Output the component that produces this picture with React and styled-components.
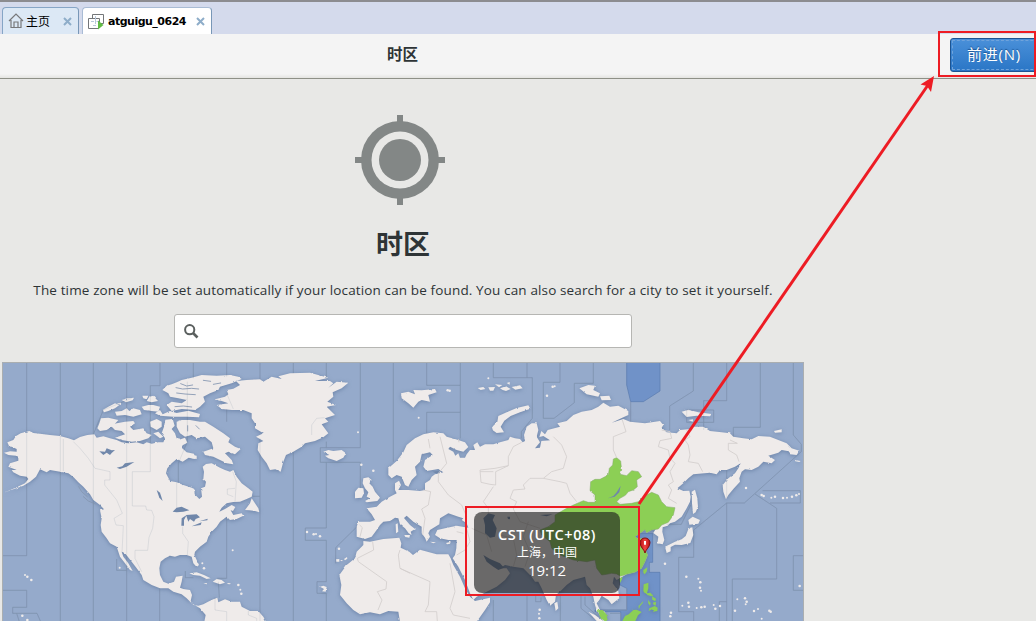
import React from 'react';
import styled, { createGlobalStyle } from 'styled-components';

const GlobalStyle = createGlobalStyle`
  * { box-sizing: border-box; }
  body { margin: 0; overflow: hidden; background: #e8e8e6; }
`;
const cantarell = `'Open Sans', 'Noto Sans CJK SC', sans-serif`;

const Screen = styled.main`
  position: relative;
  width: 1036px;
  height: 621px;
  overflow: hidden;
  background: #e8e8e6;
  color: #2e3436;
  font-family: ${cantarell};
`;
const TabBar = styled.nav`
  display: flex;
  align-items: flex-end;
  gap: 3px;
  height: 34px;
  padding-left: 2px;
  background: #d4daec;
  border-top: 2px solid #8c8c90;
`;
const Tab = styled.div`
  display: flex;
  align-items: center;
  width: ${p => p.$width}px;
  height: 27px;
  padding: 0 6px 0 5px;
  border: 1px solid ${p => (p.$active ? '#a9bcd5' : '#86a5c6')};
  border-right-color: #7897b7;
  border-bottom: 0;
  border-radius: 4px 4px 0 0;
  background: ${p => (p.$active ? '#fff' : '#dce8f5')};
  color: #000;
`;
const TabLabel = styled.span`
  margin-left: ${p => (p.$bold ? 4 : 2)}px;
  padding-bottom: ${p => (p.$bold ? 0 : 2)}px;
  flex: 1;
  white-space: nowrap;
  font: ${p => (p.$bold ? "700 11px 'DejaVu Sans'" : "400 12px 'Noto Sans CJK SC'")}, sans-serif;
  letter-spacing: ${p => (p.$bold ? '-0.5px' : '0')};
`;
const Header = styled.header`
  display: flex;
  align-items: center;
  height: 45px;
  background: linear-gradient(#f4f4f4 0 40px, #e4e4e1 44px);
  border-bottom: 1px solid #8e9087;
`;
const HeaderTitle = styled.h1`
  flex: none;
  width: 805px;
  margin: 0;
  padding-bottom: 5px;
  text-align: center;
  font-size: 15.5px;
  line-height: 24px;
  font-weight: 700;
`;
const NextButton = styled.button`
  flex: none;
  width: 100px;
  height: 34px;
  margin: -3px 0 0 145px;
  padding: 0 14px 2px 16px;
  border: 1px solid #1c5492;
  border-radius: 3px;
  outline: 1px dashed #6fa3db;
  outline-offset: -3px;
  background: linear-gradient(#4a90d9, #2a76c6);
  color: #fff;
  text-align: left;
  font: 400 15px/30px ${cantarell};
  letter-spacing: .75px;
  text-shadow: 0 -1px 1px #1c5492;
  white-space: nowrap;
`;
const Content = styled.section`
  display: flex;
  flex-direction: column;
  align-items: center;
  width: 806px;
`;
const TargetIcon = styled.svg`
  width: 90px;
  height: 90px;
  margin: 36px 6px 0 0;
`;
const Title = styled.h2`
  margin: 20px 0 0;
  font-size: 27px;
  line-height: 38px;
  font-weight: 700;
`;
const Description = styled.p`
  margin: 17px 0 0;
  font-size: 13.5px;
  line-height: 20px;
  white-space: nowrap;
  letter-spacing: ${p => p.$spacing}px;
`;
const SearchBox = styled.label`
  display: flex;
  align-items: center;
  width: 458px;
  height: 34px;
  margin-top: 14px;
  padding-left: 9px;
  border: 1px solid #b6b6b3;
  border-radius: 3px;
  background: #fff;
`;
const SearchInput = styled.input`
  flex: 1;
  border: 0;
  outline: 0;
  background: transparent;
`;
const MapFrame = styled.div`
  position: relative;
  width: 802px;
  height: 259px;
  margin-top: 14px;
  overflow: hidden;
`;
const MapDrawing = styled.svg`
  display: block;
  width: 802px;
  height: 259px;
`;
const ZoneBubble = styled.div`
  position: absolute;
  left: 472px;
  top: 150px;
  display: flex;
  flex-direction: column;
  align-items: center;
  width: 146px;
  height: 81px;
  padding-top: 14px;
  border-radius: 8px;
  background: rgba(31, 31, 31, .64);
  color: #fff;
`;
const BubbleLine = styled.span`
  font-size: ${p => p.$size}px;
  line-height: ${p => p.$line || 18}px;
  font-weight: ${p => p.$weight || 400};
  letter-spacing: ${p => p.$spacing || 0}px;
  white-space: nowrap;
`;
const Annotation = styled.svg`
  position: absolute;
  inset: 0;
  width: 1036px;
  height: 621px;
  pointer-events: none;
`;

const northAmerica = `M22 262L40 255 48 243 62 235 88 228 100 234 120 236 150 240 180 243 205 250 222 256 240 246 262 240 283 238 290 248 310 244 330 250 350 255 365 262 385 265 410 262 430 268 440 262 455 266 475 262 490 262 495 250 485 235 492 215 496 194 518 192 524 212 515 222 525 235 530 250 550 262 545 278 560 292 582 296 586 312 566 308 548 320 530 312 515 325 502 340 498 355 510 378 530 382 550 390 575 398 583 402 584 418 598 432 606 425 603 400 615 395 618 380 610 372 612 350 608 335 618 327 635 325 660 338 675 345 690 350 700 345 710 365 725 385 745 400 758 410 755 425 740 432 720 440 700 441 680 445 665 458 658 470 675 462 695 450 706 456 699 468 692 466 700 480 725 475 730 482 710 492 690 495 680 485 660 500 650 515 635 530 625 545 620 560 600 575 585 590 583 600 590 615 597 630 590 636 580 625 575 605 560 600 540 600 525 605 510 602 495 610 482 620 478 640 480 660 490 680 505 686 522 680 528 665 548 662 545 680 540 698 550 702 570 705 576 720 572 738 580 750 595 752 610 748 624 740 640 733 652 728 655 742 675 733 695 740 720 740 725 755 750 768 775 768 790 785 798 800 613 800 617 780 600 760 575 745 560 730 545 718 520 710 505 700 480 700 455 690 430 675 425 660 410 640 395 620 375 595 365 590 370 605 385 625 398 648 390 645 375 625 360 605 350 575 330 565 320 550 305 530 302 510 305 490 300 466 312 463 300 450 280 435 270 418 250 395 235 382 220 366 205 355 180 350 150 345 140 352 120 343 108 365 90 380 70 392 40 403 12 413 50 397 75 385 85 372 80 365 60 362 40 352 35 345 50 345 25 335 30 325 55 317 55 310 48 302 25 300 12 293 30 289 50 290 50 282 35 275 28 275Z`;
const eurasia = `M1165 340L1190 318 1210 292 1220 270 1245 250 1270 238 1300 232 1330 235 1340 245 1365 252 1395 262 1405 276 1390 290 1370 285 1350 275 1345 282 1360 290 1366 302 1375 295 1380 308 1395 308 1400 298 1410 285 1425 285 1420 270 1432 262 1440 275 1455 268 1480 268 1500 262 1525 255 1530 245 1545 250 1560 252 1568 262 1575 258 1572 240 1580 215 1595 205 1610 205 1615 225 1610 245 1620 262 1605 280 1620 278 1624 258 1650 256 1630 243 1618 246 1624 228 1635 238 1643 225 1680 215 1672 205 1700 198 1720 180 1745 170 1775 165 1795 155 1810 143 1830 155 1855 152 1885 168 1885 180 1870 187 1835 203 1870 192 1890 200 1935 205 1980 198 1990 210 1985 218 2000 232 2030 235 2040 225 2070 222 2080 215 2110 215 2130 228 2165 232 2190 235 2200 245 2230 250 2255 253 2275 243 2310 245 2335 255 2360 265 2375 280 2398 287 2390 300 2370 298 2362 288 2345 285 2335 293 2305 302 2325 315 2315 325 2290 320 2275 335 2255 345 2235 343 2225 350 2218 370 2220 380 2202 400 2185 420 2178 433 2170 410 2168 390 2185 370 2205 355 2215 340 2222 325 2205 335 2180 345 2160 345 2150 358 2130 353 2080 358 2065 370 2050 385 2032 400 2050 408 2068 407 2072 425 2070 440 2060 460 2045 485 2025 500 2010 505 2003 512 1988 517 1987 530 1993 555 1988 568 1972 565 1975 545 1960 534 1967 522 1955 525 1940 533 1935 524 1920 535 1905 545 1915 551 1935 550 1940 558 1930 570 1943 600 1935 620 1925 640 1905 652 1880 658 1862 668 1850 675 1842 665 1838 685 1855 708 1858 730 1835 748 1825 735 1805 722 1798 735 1790 745 1800 765 1815 770 1820 795 1810 798 1790 765 1785 750 1780 725 1770 700 1760 690 1755 665 1745 668 1720 675 1700 690 1685 705 1668 720 1665 740 1650 752 1640 735 1625 700 1615 680 1605 680 1595 665 1570 640 1540 635 1515 630 1500 640 1520 640 1530 655 1515 675 1490 695 1460 710 1430 725 1420 735 1410 715 1395 675 1375 635 1358 610 1365 600 1369 580 1370 555 1345 555 1320 550 1305 540 1312 525 1335 520 1370 512 1405 518 1400 505 1385 495 1390 490 1375 485 1345 475 1320 490 1318 508 1290 525 1285 535 1290 545 1280 560 1275 548 1265 535 1265 515 1240 500 1220 482 1212 489 1230 510 1245 522 1232 530 1235 540 1226 535 1215 520 1200 508 1195 490 1185 488 1170 498 1150 500 1140 510 1130 525 1115 545 1095 552 1070 545 1070 515 1075 500 1110 500 1125 495 1115 478 1100 460 1130 455 1145 440 1170 425 1190 415 1185 405 1185 385 1197 377 1203 390 1195 405 1225 405 1260 408 1275 405 1275 385 1290 375 1295 365 1305 358 1330 352 1315 342 1280 348 1270 335 1275 315 1298 300 1290 292 1265 298 1260 320 1245 335 1250 360 1235 375 1225 395 1215 390 1205 365 1190 360 1175 370 1165 360Z`;
const africa = `M1090 558L1110 560 1150 552 1198 548 1204 565 1202 578 1228 590 1239 600 1260 584 1310 598 1345 598 1352 610 1360 630 1380 665 1395 700 1410 725 1425 738 1470 728 1470 742 1455 765 1430 800 1200 800 1195 770 1165 768 1140 778 1110 772 1080 778 1060 765 1040 745 1020 720 1024 690 1018 660 1040 630 1065 610 1070 590 1090 570Z`;
const greenland = `M645 133L675 125 685 118 680 105 700 101 720 90 708 78 740 75 780 73 790 80 815 65 845 72 835 64 870 55 930 53 985 68 945 78 990 78 1000 85 985 98 1010 80 1045 83 1025 100 998 112 1000 125 982 140 1008 150 980 155 1005 180 975 190 985 200 965 208 985 235 970 247 945 258 915 265 905 275 880 290 858 300 850 320 842 350 826 343 810 345 800 325 785 305 773 285 775 265 790 258 768 245 790 235 765 220 765 205 755 190 755 175 730 165 695 165 665 162 650 150 685 145 665 138Z`;
const islands = [
  'M303 190L325 188 355 195 340 212 320 225 300 228 292 220 298 205Z',
  'M330 210L350 205 375 200 400 198 405 205 390 215 400 225 430 220 440 235 455 240 445 250 420 258 395 260 365 255 345 248 375 238 365 228 345 225Z',
  'M308 165L325 155 345 145 358 150 345 160 325 168 312 172Z',
  'M345 170L365 168 380 160 388 168 400 160 420 165 425 178 400 185 375 180 350 182Z',
  'M365 135L385 130 402 128 398 136 378 142Z', 'M350 145L363 143 363 150Z',
  'M427 122L445 122 440 133 430 130Z', 'M448 125L460 122 474 138 455 142 440 138Z',
  'M425 155L445 150 460 150 480 155 475 170 455 168 432 165Z',
  'M450 200L470 192 485 200 485 215 470 225 452 215Z', 'M460 235L475 230 490 245 480 250Z',
  'M487 105L500 92 515 88 530 82 545 75 575 68 605 60 650 62 690 60 715 65 725 72 695 85 660 95 655 105 630 115 610 125 615 140 600 155 585 165 545 162 515 168 500 150 515 140 545 145 560 135 535 130 510 125 505 115Z',
  'M465 175L480 165 488 178 510 168 530 174 565 167 600 177 597 187 560 185 520 185 480 182Z',
  'M530 200L545 195 570 195 600 200 615 200 640 215 670 235 690 250 685 262 705 275 722 282 705 298 685 290 675 295 695 315 700 328 680 325 660 315 640 305 615 300 610 290 640 280 635 262 615 245 590 250 575 240 555 245 540 235 530 215Z',
  'M535 255L555 248 562 263 545 272Z', 'M570 298L590 302 590 312 575 310Z',
  'M735 465L750 445 755 430 762 440 775 460 778 472 765 468 748 466Z',
  'M568 655L590 652 612 660 632 670 620 672 600 662 580 660Z',
  'M638 680L650 672 665 675 675 683 660 688Z', 'M610 685L621 684 620 688Z', 'M682 684L692 685 690 688 683 687Z',
  'M970 290L985 285 1000 288 1025 285 1038 295 1030 308 1010 318 985 310 975 302 988 300Z',
  'M1090 370L1105 367 1115 375 1108 385 1118 395 1125 410 1140 428 1132 438 1100 442 1095 438 1110 430 1100 425 1105 412 1095 400 1088 385Z',
  'M1065 410L1075 398 1090 400 1092 415 1085 428 1065 430Z',
  'M1203 115L1225 110 1245 118 1240 105 1265 106 1305 102 1310 112 1285 120 1290 140 1265 135 1255 140 1240 158 1225 145 1205 130Z',
  'M1473 222L1480 212 1492 200 1495 183 1520 172 1550 159 1585 151 1591 161 1560 172 1532 183 1513 197 1502 215 1512 232 1490 234Z',
  'M1738 100L1765 90 1785 92 1780 105 1800 115 1795 125 1760 118Z', 'M1800 124L1828 122 1833 135 1805 136Z',
  'M2045 170L2065 164 2095 172 2135 177 2130 184 2090 182 2060 186Z', 'M2065 195L2080 193 2078 200Z',
  'M2322 228L2345 223 2345 232 2325 233Z', 'M2385 315L2402 318 2398 321 2386 319Z',
  'M2075 410L2085 404 2092 430 2094 455 2087 472 2079 477 2076 445Z',
  'M2065 495L2078 485 2100 495 2095 506 2068 509Z',
  'M2066 520L2077 517 2080 540 2071 564 2045 570 2025 569 2012 576 2012 589 2000 594 1995 575 2025 560 2045 553 2057 543Z',
  'M1187 508L1193 505 1195 530 1188 535Z', 'M1213 540L1230 540 1228 548 1216 546Z',
  'M1338 564L1352 560 1350 566 1341 568Z', 'M1290 560L1308 562 1300 565Z',
  'M1663 745L1672 740 1675 760 1667 768Z', 'M1765 770L1785 780 1810 798 1790 798Z',
  'M1433 99L1450 96 1456 102 1442 105Z', 'M1465 97L1485 96 1480 107 1470 107Z', 'M1485 88L1507 90 1497 97Z',
  'M1500 100L1518 94 1532 102 1518 108 1508 105Z', 'M1520 84L1529 81 1529 89Z', 'M1535 96L1560 91 1568 100 1546 104Z',
  'M1008 613L1018 612 1018 620 1009 620Z', 'M1020 615L1028 615 1026 619Z', 'M1032 612L1041 606 1042 611 1035 616Z',
  'M960 695L970 692 980 696 977 710 966 709 972 702Z',
];
const china = `M1700 460L1720 450 1750 437 1765 442 1785 442 1785 420 1770 407 1772 380 1785 373 1800 373 1825 360 1828 340 1838 330 1840 312 1850 308 1862 318 1865 345 1860 358 1880 362 1895 347 1915 350 1925 365 1910 375 1912 395 1900 405 1885 410 1876 421 1860 430 1850 440 1860 448 1895 445 1915 440 1930 425 1955 412 1975 420 1985 440 2000 455 2025 458 2020 480 2005 502 1985 510 1975 522 1955 525 1940 533 1935 524 1920 535 1905 545 1915 551 1935 550 1940 558 1930 570 1943 600 1935 620 1925 640 1905 652 1880 658 1862 664 1850 657 1835 655 1820 658 1805 660 1790 640 1785 615 1760 620 1720 615 1680 600 1655 580 1650 560 1625 540 1620 525 1645 515 1665 500 1665 480Z`;
const green = [
  'M1930 645L1942 637 1940 650 1934 658 1930 653Z',
  'M1931 688L1945 683 1945 700 1941 715 1951 713 1960 722 1953 724 1936 718 1930 708Z',
  'M1956 724L1968 731 1966 739 1957 734Z', 'M1944 735L1952 744 1950 752 1945 745Z', 'M1960 742L1968 741 1967 752 1959 748Z',
  'M1948 760L1964 753 1973 758 1972 768 1960 770 1956 763 1946 768Z', 'M1915 754L1930 738 1928 744 1916 758Z',
  'M1866 800L1875 783 1886 778 1900 765 1910 764 1925 771 1914 781 1905 800Z',
  'M1793 765L1808 765 1819 778 1824 800 1812 797 1800 785Z', 'M1858 670L1868 665 1865 675 1860 684Z',
];
const lakes = [
  'M518 470L530 458 545 455 568 466 550 470 530 472Z', 'M545 490L560 480 552 495 552 512 544 512Z',
  'M558 480L590 478 600 487 587 492 582 500 570 492 565 500Z', 'M575 514L605 502 602 510Z', 'M598 499L623 491 622 496Z',
  'M470 405L480 413 488 438 478 428Z', 'M298 289L315 290 320 280 335 286 345 285 335 294 330 300 320 293 310 300Z',
  'M350 338L367 334 375 325 403 321 380 335 360 342Z',
  'M1450 490L1465 475 1485 480 1478 495 1490 520 1485 545 1470 548 1455 535 1455 510Z',
  'M1450 600L1470 612 1500 625 1512 638 1495 645 1480 635 1460 620Z',
  'M1522 485L1530 485 1530 493 1524 492Z', 'M1620 480L1658 478 1640 484Z',
  'M1824 430L1840 423 1850 412 1862 392 1858 412 1844 425Z', 'M1298 350L1312 348 1322 350 1310 356Z',
];
const dots = [[75,660],[82,665],[94,675],[359,638],[67,782],[82,795],[698,586],[921,531],[941,538],[948,537],[960,544],[1017,581],[1074,232],[1084,329],[1120,347],[1256,188],[1343,106],[1349,107],[1465,70],[1641,122],[1658,95],[1664,94],[2285,420],[2291,423],[2314,428],[2325,425],[2349,429],[2361,428],[2376,425],[2389,421],[2397,417],[2238,399],[2059,665],[2095,671],[2101,682],[2100,698],[2103,707],[2013,773],[2011,784],[2047,752],[2065,743],[2067,755],[2090,759],[2104,757],[2114,755],[2141,750],[2146,761],[2160,753],[2212,733],[2235,730],[2240,740],[2237,748],[2205,767],[2262,768],[2274,762],[2308,767],[2312,770],[2285,791],[2399,693],[1619,764],[1617,776],[1618,790],[1995,626],[607,625],[612,640],[715,690],[721,704],[724,716]];
const zoneLines = `M80 24V602H6M181 24V800M280 24V800M380 24V800M480 24V92H451V350H397V453H437L440 465 455 466 462 485 458 520 447 547 443 586H405V610L425 650M479 700V800M580 24V70M562 80V260L535 325V382M530 382V460M6 706H80V757H38V775H111L122 800M50 775 58 800M280 238 310 165 395 130M190 252V348M220 260 240 280 265 310 285 340 330 350V375H314V390L350 435 367 475 342 490 348 510 370 512 366 592M548 515V535L565 560 562 600M350 612V646H380M556 648V668H580M680 24V65M680 162V200M680 490V670H652M780 24V73M780 250V800M655 680 658 728M880 24V55M880 290V800M979 24V70M979 260V278H961V322H979V519H916V556H979V680H951V715H979V800M979 278H1081V24M979 322H1081V400M1071 515 1007 578V625M1180 24V320M1280 24V91H1381V24M1381 91V250M1381 172H1280V235M1480 24V68H1597V190L1564 230V250M1581 24V68M1680 24V82H1630V190H1662L1723 143V85H1780V24M1892 140V200M2080 24V108L2009 153V225M2180 24V137H2111V225M2281 24V217H2200V245M2141 165V202H2060V165H2141M2380 24V240L2404 268V290L2233 444H2180V800M2180 430 2180 345M2265 417 2330 460V672H2197V800M2288 407H2401V444H2310M2412 602H2380V706H2412M2180 740H2158V800M2180 444 2081 525V607H2036V770H2081V800M2072 450 2044 508H2000M1880 765H1800M1880 765V700M1830 775H1862V800M1480 735V800M1581 720V800M1607 720V740H1623V728M1681 720V800M1743 720V760L1780 790M1755 725V750L1795 785M645 728V765L680 770V800M745 768V780L770 790V800M681 118 700 162M698 350 709 380 705 440M705 400 682 402V418L700 425M974 188 950 190 935 210V240M758 424H780`;
const borders = `M1079 510 1087 518 1080 545M1118 560 1121 585 1072 610 1075 620 1160 680 1158 702 1132 710 1146 735 1134 765M1200 585 1195 600 1200 640 1230 655M1200 640 1290 680 1285 750 1275 770 1310 770 1312 800M1350 625 1365 710 1350 760 1360 780 1410 790M1285 252 1290 280M1320 245 1340 325 1315 355 1315 380 1345 420 1385 450 1400 485M1270 405 1292 410 1285 450 1265 462 1275 490 1268 540M1375 252 1377 262M1565 262 1540 275 1525 305 1525 332 1485 340 1440 345 1443 382 1470 388 1487 390 1487 350 1525 332M1440 350 1480 350M1480 395 1450 440 1465 460 1465 475M1660 245 1685 270 1700 305 1690 340 1655 350 1630 370 1590 370 1570 390 1575 402 1540 405 1530 430 1550 440 1540 462 1560 500 1620 520M1630 370 1680 380 1700 385 1710 415 1730 440M1867 195 1878 230 1840 245V285L1850 308M1985 225 2010 230 2015 250 1980 257 1975 275 2005 285 2010 310 2025 325 2010 350 2020 380 2005 390 2015 405 2005 430 2030 445M2060 225 2070 245 2055 255 2065 270 2070 300 2065 320 2095 325 2108 350M2190 255 2212 265 2185 265 2185 285 2210 300 2217 320M1400 520 1410 560 1395 585 1370 600M1415 520 1460 540 1475 590M1500 540 1540 550 1550 600 1540 635M1585 500 1570 545 1590 590 1575 635M1370 530 1390 535`;

function WorldMap() {
  return (
    <MapDrawing viewBox="6 21 2406 777" preserveAspectRatio="none">
      <defs>
        <filter id="land" x="-5%" y="-5%" width="110%" height="110%" colorInterpolationFilters="sRGB">
          <feTurbulence type="fractalNoise" baseFrequency=".07" numOctaves="2" seed="8" result="noise" />
          <feDisplacementMap in="SourceGraphic" in2="noise" scale="6" xChannelSelector="R" yChannelSelector="G" result="coast" />
          <feDropShadow in="coast" dx="0" dy="3" stdDeviation="6" floodColor="#566f95" floodOpacity=".65" />
        </filter>
        <linearGradient id="pin" x1="0" x2="1">
          <stop offset="0" stopColor="#b51013" /><stop offset=".5" stopColor="#f24642" /><stop offset="1" stopColor="#b51013" />
        </linearGradient>
      </defs>
      <rect x="6" y="21" width="2406" height="777" fill="#95aacb" />
      <g fill="#7092c8" stroke="#597aad" strokeWidth="2">
        <path d="M1880 21H1980V108L1930 140H1892L1880 90Z" />
        <path d="M1900 535H1958V622H1948V652H1980V800H1862V770H1785V765H1880V700L1860 690 1855 650Z" />
      </g>
      <path d={zoneLines} fill="none" stroke="#8195b6" strokeWidth="2.5" />
      <g filter="url(#land)">
        <g fill="#efebea">
          {[northAmerica, greenland, eurasia, africa, ...islands].map((d, i) => <path key={i} d={d} />)}
        </g>
        <g fill="#8ccf55">
          <path d={china} stroke="#84a86d" strokeWidth="1.5" />
          {green.map((d, i) => <path key={i} d={d} />)}
        </g>
      </g>
      <g fill="#7087aa">{lakes.map((d, i) => <path key={i} d={d} />)}</g>
      <g fill="none" stroke="#8495b0" strokeWidth="2.6" strokeLinecap="round">
        <path d="M528 98 548 102 575 100 596 102M530 114 555 117 586 119M525 155 550 153 575 156M542 86 560 93 578 90M610 76 632 79M640 88 662 84M563 212V228M588 212 598 222" />
        <path d="M236 395 245 410 262 425M250 425 265 438 286 447" />
      </g>
      <path d={zoneLines} fill="none" stroke="#8290a5" strokeWidth="2" opacity=".28" />
      <path d={borders} fill="none" stroke="#d2cecd" strokeWidth="2.5" strokeLinejoin="round" />
      <g fill="#efebea">{dots.map(([x, y], i) => <circle key={i} cx={x} cy={y} r={i % 3 ? 3.8 : 3} />)}</g>
      <path d="M1935 594C1933 583 1920 577 1920 563A15 14 0 0 1 1950 563C1950 577 1937 583 1935 594Z" fill="url(#pin)" stroke="#850d10" strokeWidth="3" />
      <path d="M1932 558H1938V569H1932Z" fill="#fff" />
      <path d="M7.5 798V22.5H2410.5V798" fill="none" stroke="#aaaeb0" strokeWidth="3" />
    </MapDrawing>
  );
}

function CloseIcon() {
  return <svg width="9" height="9" viewBox="0 0 9 9"><path d="M1 1 8 8M8 1 1 8" stroke="#8eadc9" strokeWidth="2" /></svg>;
}
function HomeIcon() {
  return <svg width="16" height="16" viewBox="0 0 16 16" fill="none" stroke="#77787a" strokeWidth="1.2"><path d="M1 8 8 1 15 8M3 7V14.5H13V7M6 14V9H10V14" /></svg>;
}
function MachineIcon() {
  return (
    <svg width="16" height="17" viewBox="0 0 16 17" fill="none" stroke="#737679">
      <path d="M4.5 5V1.5H15.5V10.5H12" /><path d="M10 15.5H.5V5.5H11.5V9" />
      <path d="M3 8.5H6M8.5 8.5H11M7.5 3V11M5 12.5H8" stroke="#b9c9dc" />
      <path d="M10 7.5 15.5 12 10 16.5Z" fill="#60bc45" stroke="none" />
    </svg>
  );
}

export default function App() {
  return (
    <Screen>
      <GlobalStyle />
      <TabBar>
        <Tab $width={77}><HomeIcon /><TabLabel>主页</TabLabel><CloseIcon /></Tab>
        <Tab $width={130} $active><MachineIcon /><TabLabel $bold>atguigu_0624</TabLabel><CloseIcon /></Tab>
      </TabBar>
      <Header>
        <HeaderTitle>时区</HeaderTitle>
        <NextButton>前进(N)</NextButton>
      </Header>
      <Content>
        <TargetIcon viewBox="0 0 90 90">
          <g fill="#838786"><path d="M42 0H48V90H42ZM0 42H90V48H0Z" /><circle cx="45" cy="45" r="39" /></g>
          <circle cx="45" cy="45" r="28.5" fill="#e8e8e6" /><circle cx="45" cy="45" r="21" fill="#838786" />
        </TargetIcon>
        <Title>时区</Title>
        <Description $spacing={0.135}>The time zone will be set automatically if your location can be found. You can also search for a city to set it yourself.</Description>
        <SearchBox>
          <svg width="15" height="15" viewBox="0 0 15 15" fill="none" stroke="#5b605f"><circle cx="5.7" cy="5.7" r="4.6" strokeWidth="2" /><path d="M9 9 13.5 13.5" strokeWidth="2.6" /></svg>
          <SearchInput aria-label="时区" />
        </SearchBox>
        <MapFrame>
          <WorldMap />
          <ZoneBubble>
            <BubbleLine $size={14.5} $weight={600} $spacing={0.55}>CST (UTC+08)</BubbleLine>
            <BubbleLine $size={12}>上海，中国</BubbleLine>
            <BubbleLine $size={15} $weight={500} $line={16}>19:12</BubbleLine>
          </ZoneBubble>
        </MapFrame>
      </Content>
      <Annotation viewBox="0 0 1036 621" fill="none" stroke="#ed1c24">
        <path d="M939 32H1035V76H939ZM466 507H639V595H466Z" strokeWidth="2" />
        <path d="M639 504 928 85" strokeWidth="3" />
        <path d="M934 76 920.5 84.5 927 86 931 92Z" fill="#ed1c24" stroke="none" />
      </Annotation>
    </Screen>
  );
}
